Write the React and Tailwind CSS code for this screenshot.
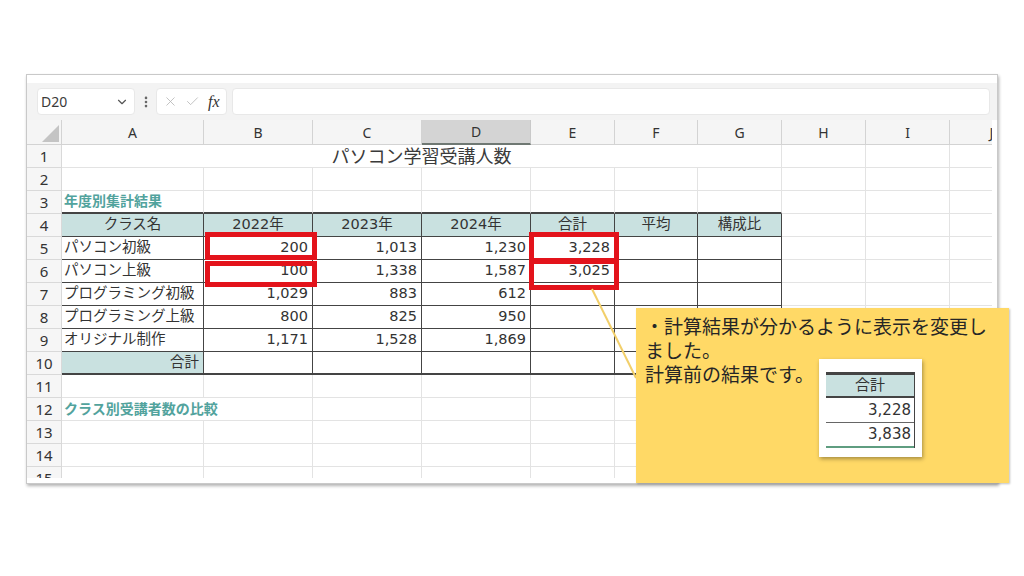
import { X, Check, ChevronDown, EllipsisVertical } from "lucide-react";

const LETTERS = ["A", "B", "C", "D", "E", "F", "G", "H", "I", "J"];
const COLW = [
  "w-[142px]",
  "w-[109px]",
  "w-[109px]",
  "w-[109px]",
  "w-[84px]",
  "w-[83px]",
  "w-[84px]",
  "w-[84px]",
  "w-[84px]",
  "w-[84px]",
];

const ROWS = {
  4: ["クラス名", "2022年", "2023年", "2024年", "合計", "平均", "構成比"],
  5: ["パソコン初級", "200", "1,013", "1,230", "3,228"],
  6: ["パソコン上級", "100", "1,338", "1,587", "3,025"],
  7: ["プログラミング初級", "1,029", "883", "612"],
  8: ["プログラミング上級", "800", "825", "950"],
  9: ["オリジナル制作", "1,171", "1,528", "1,869"],
  10: ["合計"],
};

const CELL_FONT = "font-['DejaVu_Sans','Noto_Sans_CJK_JP',sans-serif]";

function Cell({ r, c }) {
  const inTable = r >= 4 && r <= 10 && c <= 6;
  let border = "border-r border-b border-[#e3e3e3]";
  if (inTable) {
    border = r === 10 ? "border-r border-b-2 border-[#444444]" : "border-r border-b border-[#444444]";
  } else if (r === 3 && c <= 6) {
    border = "border-r border-r-[#e3e3e3] border-b-2 border-b-[#444444]";
  } else if (r === 12 && c === 0) {
    border = "border-b border-[#e3e3e3]";
  }

  const row = ROWS[r] || [];
  const text = row[c] || "";
  let inner = null;
  let extra = "";

  if (r === 3 && c === 0) {
    inner = <span className="font-bold text-[#52a39d] text-[14px] pl-[2px]">年度別集計結果</span>;
  } else if (r === 12 && c === 0) {
    inner = (
      <span className="font-bold text-[#52a39d] text-[14px] pl-[2px] whitespace-nowrap">
        クラス別受講者数の比較
      </span>
    );
    extra = "overflow-visible";
  } else if (r === 4 && c <= 6) {
    extra = "justify-center bg-[#c9e1e0]";
    inner = text;
  } else if (r === 10 && c === 0) {
    extra = "justify-end pr-[4px] bg-[#c9e1e0]";
    inner = text;
  } else if (r >= 5 && r <= 9 && c === 0) {
    extra = "pl-[2px] whitespace-nowrap";
    inner = text;
  } else if (r >= 5 && r <= 9) {
    extra = "justify-end pr-[4px]";
    inner = text;
  }

  return (
    <div className={`${COLW[c]} h-full shrink-0 flex items-center ${border} ${extra}`}>
      {inner}
    </div>
  );
}

function GridRow({ r }) {
  return (
    <div className="flex h-[23px] w-max">
      <div className="w-[35px] h-full shrink-0 flex items-center justify-center bg-[#f6f6f6] border-r border-b border-[#d9d9d9] text-[15px] text-[#333] font-['Noto_Sans',sans-serif]">
        {r}
      </div>
      {r === 1 ? (
        <>
          <div className="w-[720px] h-full shrink-0 flex items-center justify-center border-r border-b border-[#e3e3e3] text-[18px] text-[#3a3a3a]">
            パソコン学習受講人数
          </div>
          {[7, 8, 9].map((c) => (
            <Cell key={c} r={r} c={c} />
          ))}
        </>
      ) : (
        LETTERS.map((_, c) => <Cell key={c} r={r} c={c} />)
      )}
    </div>
  );
}

function FormulaBar() {
  return (
    <div className="h-[37px] bg-[#f3f3f3] flex items-center pl-[10px]">
      <div className="w-[98px] h-[27px] bg-white rounded-[4px] border border-[#e8e8e8] flex items-center justify-between pl-[3px] pr-[5px]">
        <span className="text-[14px] text-[#3a3a3a] font-['Noto_Sans',sans-serif]">D20</span>
        <ChevronDown size={14} strokeWidth={2} className="text-[#555]" />
      </div>
      <div className="w-[21px] flex justify-center">
        <EllipsisVertical size={14} strokeWidth={2.5} className="text-[#666]" />
      </div>
      <div className="w-[71px] h-[27px] bg-white rounded-[4px] border border-[#e8e8e8] flex items-center pl-[6px]">
        <X size={15} strokeWidth={1.3} className="text-[#b5b5b5]" />
        <Check size={15} strokeWidth={1.3} className="text-[#b5b5b5] ml-[7px]" />
        <span className="ml-[8px] italic text-[16px] text-[#333] font-['Liberation_Serif',serif]">fx</span>
      </div>
      <div className="ml-[5px] w-[758px] h-[27px] bg-white rounded-[4px] border border-[#e8e8e8]" />
    </div>
  );
}

function ColumnHeader() {
  return (
    <div className="h-[25px] w-[965px] overflow-hidden">
      <div className="flex h-full w-max font-['Noto_Sans',sans-serif] text-[14px] text-[#333]">
        <div className="w-[35px] h-full shrink-0 bg-[#f5f5f5] border-r border-b border-[#d3d3d3]">
          <svg width="34" height="24" viewBox="0 0 34 24">
            <polygon points="15,22 32,22 32,5" fill="#c4c4c4" />
          </svg>
        </div>
        {LETTERS.map((l, c) =>
          c === 3 ? (
            <div
              key={l}
              className={`${COLW[c]} h-full shrink-0 flex items-center justify-center bg-[#d4d4d4] border-r border-r-[#c9c9c9] border-b-2 border-b-[#6f7873]`}
            >
              {l}
            </div>
          ) : (
            <div
              key={l}
              className={`${COLW[c]} h-full shrink-0 flex items-center justify-center bg-[#f5f5f5] border-r border-b border-[#d3d3d3]`}
            >
              {l}
            </div>
          )
        )}
      </div>
    </div>
  );
}

function Callout() {
  return (
    <div className="absolute left-[609px] top-[233px] w-[373px] h-[175px] bg-[#ffd966] shadow-[1px_1px_2px_rgba(0,0,0,0.25)] pl-[9px] pt-[6px] font-['Noto_Sans_CJK_JP',sans-serif] text-[19px] leading-[24px] text-[#262626]">
      <p>
        ・計算結果が分かるように表示を変更し
        <br />
        ました。
        <br />
        計算前の結果です。
      </p>
      <div className="absolute left-[183px] top-[51px] w-[103px] h-[98px] bg-white shadow-[1px_2px_4px_rgba(0,0,0,0.35)] pl-[7px] pt-[13px]">
        <div className={`w-[89px] border-r border-[#444] text-[15px] text-[#333] leading-none ${CELL_FONT}`}>
          <div className="h-[26px] flex items-center justify-center bg-[#c9e1e0] border-t-[3px] border-b-2 border-[#444]">
            合計
          </div>
          <div className="h-[25px] flex items-center justify-end pr-[3px] border-b border-[#666]">3,228</div>
          <div className="h-[25px] flex items-center justify-end pr-[3px] border-b-2 border-[#5f9d80]">3,838</div>
        </div>
      </div>
    </div>
  );
}

export default function App() {
  return (
    <div className="w-[1024px] h-[576px] bg-white overflow-hidden pt-[74px] pl-[26px]">
      <div className="relative w-[972px] h-[410px] border border-[#c9c9c9] bg-white shadow-[1px_2px_3px_rgba(0,0,0,0.3)]">
        <div className="h-[8px]" />
        <FormulaBar />
        <ColumnHeader />
        <div className={`h-[333px] w-[965px] overflow-hidden bg-white text-[14.5px] text-[#333] ${CELL_FONT}`}>
          {Array.from({ length: 15 }, (_, i) => (
            <GridRow key={i} r={i + 1} />
          ))}
        </div>

        {/* red highlight boxes */}
        <div className="absolute left-[178px] top-[157px] w-[112px] h-[28px] border-[5px] border-[#e3131b]" />
        <div className="absolute left-[178px] top-[186px] w-[112px] h-[26px] border-[5px] border-[#e3131b]" />
        <div className="absolute left-[502px] top-[157px] w-[90px] h-[31px] border-[5px] border-[#e3131b]" />
        <div className="absolute left-[502px] top-[184px] w-[90px] h-[31px] border-[5px] border-[#e3131b]" />

        {/* connector line to callout */}
        <svg className="absolute left-[560px] top-[210px]" width="60" height="100" viewBox="0 0 60 100">
          <line x1="5" y1="4" x2="49" y2="93" stroke="#f2cf6a" strokeWidth="2" />
        </svg>

        <Callout />
      </div>
    </div>
  );
}
